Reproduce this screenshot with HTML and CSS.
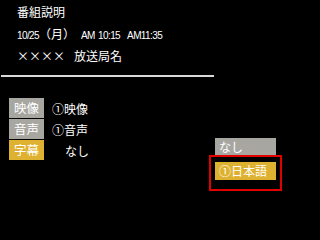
FILE: index.html
```html
<!DOCTYPE html>
<html lang="ja">
<head>
<meta charset="utf-8">
<link rel="stylesheet" href="styles.css">
</head>
<body>
<div class="screen">
  <div class="info">
    <div class="line">番組説明</div>
    <div class="line"><span class="lat">10/25</span><span class="date">（月）</span><span class="lat time">AM 10:15</span><span class="lat">AM11:35</span></div>
    <div class="line"><span class="xs">××××</span><span class="station">放送局名</span></div>
  </div>
  <div class="rule"></div>
  <div class="rows">
    <div class="row"><span class="tag">映像</span><span class="val">①映像</span></div>
    <div class="row"><span class="tag">音声</span><span class="val">①音声</span></div>
    <div class="row"><span class="tag active">字幕</span><span class="val none">なし</span></div>
  </div>
  <div class="menu">
    <div class="opt">なし</div>
    <div class="opt sel">①日本語</div>
  </div>
  <div class="mark"></div>
</div>
</body>
</html>
```
FILE: styles.css
```css
html, body {
  margin: 0;
  padding: 0;
  background: #000;
}
.screen {
  position: relative;
  width: 284px;
  height: 239px;
  background: #000;
  color: #fff;
  font-family: "Noto Sans CJK JP", sans-serif;
  font-size: 12px;
  overflow: hidden;
}
.info {
  padding: 1px 0 0 17px;
}
.line {
  height: 22px;
  line-height: 22px;
  white-space: nowrap;
}
.lat {
  font-family: "Liberation Sans", Arial, sans-serif;
  font-size: 10px;
  letter-spacing: -0.6px;
}
.date { margin-right: 6px; }
.time { margin-right: 7px; word-spacing: 1px; }
.xs { margin-right: 9px; }
.rule {
  margin: 8px 0 0 1px;
  width: 213px;
  height: 2px;
  background: #d8d8d8;
}
.rows {
  display: flex;
  flex-direction: column;
  gap: 1px;
  padding: 21px 0 0 9px;
}
.row {
  display: flex;
  align-items: center;
  height: 20px;
}
.tag {
  width: 35px;
  height: 20px;
  line-height: 20px;
  text-align: center;
  font-size: 12.5px;
  background: #a8a6a1;
  color: #fff;
}
.tag.active { background: #deb230; }
.val { margin-left: 8px; }
.val.none { margin-left: 21px; }
.menu {
  position: absolute;
  left: 215px;
  top: 138px;
  width: 61px;
  display: flex;
  flex-direction: column;
  gap: 6px;
}
.opt {
  height: 18px;
  line-height: 18px;
  padding-left: 4px;
  background: #a8a6a1;
  color: #fff;
}
.opt.sel { background: #deb230; }
.mark {
  position: absolute;
  left: 209px;
  top: 155px;
  width: 69px;
  height: 32px;
  border: 2px solid #e00000;
}
```
